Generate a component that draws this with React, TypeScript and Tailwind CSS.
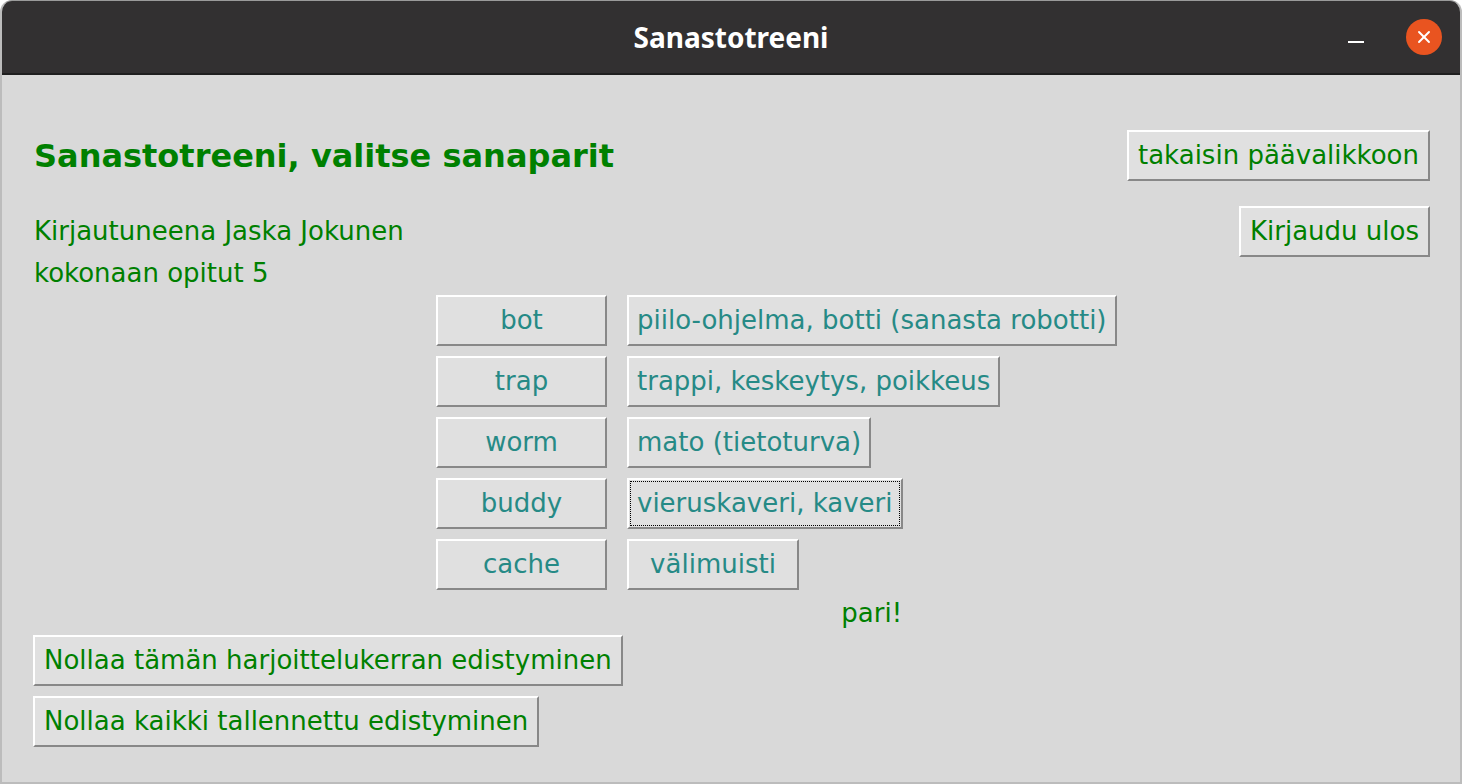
import { X } from 'lucide-react'

const font = "font-['DejaVu_Sans','Liberation_Sans',sans-serif]"

const raised =
  'whitespace-nowrap border-2 border-t-white border-l-white border-r-[#888888] border-b-[#888888] bg-[#e0e0e0]'

function TkButton({ label, className = '' }: { label: string; className?: string }) {
  return (
    <button type="button" className={`${raised} h-[51px] px-[9px] text-[26px] leading-[31px] text-[#008000] ${className}`}>
      {label}
    </button>
  )
}

const pairs = [
  ['bot', 'piilo-ohjelma, botti (sanasta robotti)'],
  ['trap', 'trappi, keskeytys, poikkeus'],
  ['worm', 'mato (tietoturva)'],
  ['buddy', 'vieruskaveri, kaveri'],
  ['cache', 'välimuisti'],
]

export default function App() {
  return (
    <div className={`h-[784px] w-[1462px] bg-white ${font}`}>
      <div className="flex h-full flex-col overflow-hidden rounded-t-[12px] border-2 border-t border-[#bcbcbc] border-t-[#9a9a9a] bg-[#d9d9d9]">
        {/* title bar */}
        <div className="grid h-[74px] shrink-0 grid-cols-[1fr_auto_1fr] items-center border-b-2 border-[#1f1f1f] bg-[#323031]">
          <div />
          <div className="font-['Noto_Sans',sans-serif] text-[28px] font-bold text-white">Sanastotreeni</div>
          <div className="flex items-center justify-end pr-[18px]">
            <div className="mt-[10px] h-[2px] w-[16px] bg-white" />
            <div className="ml-[42px] flex h-[36px] w-[36px] items-center justify-center rounded-full bg-[#e95420]">
              <X size={20} strokeWidth={2.25} color="white" />
            </div>
          </div>
        </div>

        {/* body */}
        <div className="flex flex-1 flex-col pl-[31px] pr-[30px] pt-[55px]">
          <div className="flex items-center justify-between">
            <h1 className="pl-[1px] text-[32px] font-bold leading-[38px] text-[#008000]">Sanastotreeni, valitse sanaparit</h1>
            <TkButton label="takaisin päävalikkoon" />
          </div>
          <div className="mt-[25px] flex items-center justify-between">
            <span className="pl-[1px] text-[26px] leading-[31px] text-[#008000]">Kirjautuneena Jaska Jokunen</span>
            <TkButton label="Kirjaudu ulos" />
          </div>
          <div className="pl-[1px] pt-[1px] text-[26px] leading-[31px] text-[#008000]">kokonaan opitut 5</div>

          <div className="ml-[403px] mt-[6px] grid w-max grid-cols-[171px_max-content] gap-x-[20px] gap-y-[10px]">
            {pairs.map(([word, meaning]) => (
              <div key={word} className="contents">
                <button type="button" className={`${raised} h-[51px] text-[26px] leading-[31px] text-[#268a86]`}>
                  {word}
                </button>
                <div className="flex">
                  <button
                    type="button"
                    className={`${raised} relative h-[51px] min-w-[172px] px-[8px] text-[26px] leading-[31px] text-[#268a86]`}
                  >
                    {word === 'buddy' && (
                      <span className="pointer-events-none absolute inset-[1px] border border-dotted border-black" />
                    )}
                    {meaning}
                  </button>
                </div>
              </div>
            ))}
            <div />
            <div className="-mt-[2px] text-center text-[26px] leading-[31px] text-[#008000]">pari!</div>
          </div>

          <div className="mt-[6px] flex flex-col items-start gap-y-[10px]">
            <TkButton label="Nollaa tämän harjoittelukerran edistyminen" />
            <TkButton label="Nollaa kaikki tallennettu edistyminen" />
          </div>
        </div>
      </div>
    </div>
  )
}
